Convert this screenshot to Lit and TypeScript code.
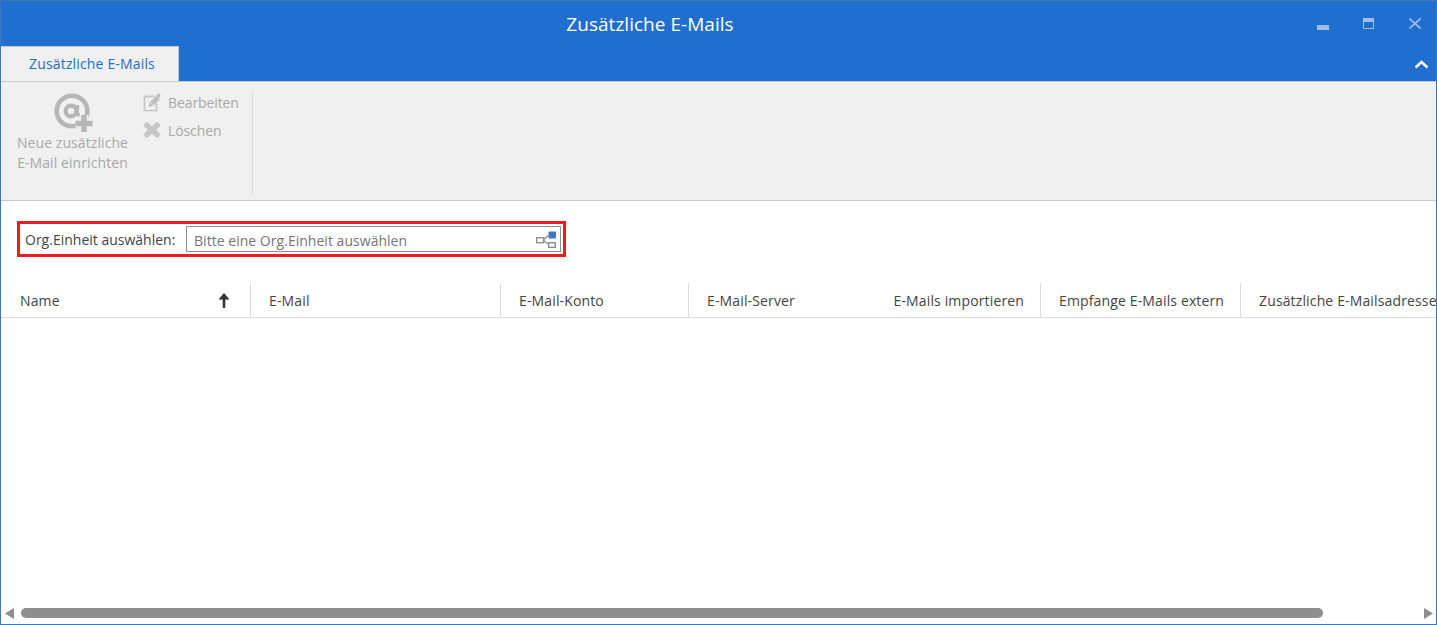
import { LitElement, html, css } from "lit";
import { customElement } from "lit/decorators.js";

@customElement("app-root")
export class AppRoot extends LitElement {
  static styles = css`
    :host {
      display: block;
      width: 1437px;
      height: 625px;
      font-family: "Open Sans", "Noto Sans", "Liberation Sans", sans-serif;
      font-size: 14px;
      color: #444;
    }
    * { box-sizing: border-box; }
    .window {
      width: 100%;
      height: 100%;
      display: flex;
      flex-direction: column;
      border: 1px solid #3a78bd;
      border-top-color: #3b76b5;
      background: #fff;
      overflow: hidden;
    }
    .titlebar {
      height: 80px;
      flex: none;
      background: #206ecd;
      display: flex;
      flex-direction: column;
      position: relative;
    }
    .title-row {
      height: 45px;
      flex: none;
      display: flex;
      align-items: center;
      justify-content: center;
      color: #fff;
      font-size: 19px;
      letter-spacing: 0.03px;
      padding: 0 137px 0 0;
    }
    .winbtns {
      position: absolute;
      top: 0;
      right: 0;
      width: 130px;
      height: 40px;
    }
    .winbtns svg { position: absolute; }
    .tab-row {
      height: 35px;
      flex: none;
      display: flex;
      align-items: flex-end;
      justify-content: space-between;
    }
    .tab {
      width: 178px;
      height: 35px;
      background: #f0f0f0;
      border: 1px solid #c8c8c8;
      border-bottom: none;
      border-left-color: #f0f0f0;
      color: #206ecd;
      display: flex;
      align-items: center;
      justify-content: center;
      letter-spacing: 0.16px;
      padding: 0 0 1px 4px;
    }
    .collapse { margin: 0 7px 12px 0; display: block; }
    .ribbon {
      height: 120px;
      flex: none;
      background: #f0f0f0;
      border-top: 1px solid #c8c8c8;
      border-bottom: 1px solid #c8c8c8;
      display: flex;
      padding: 9px 0 5px 0;
      color: #a9a9a9;
      letter-spacing: 0.08px;
    }
    .big {
      width: 142px;
      display: flex;
      flex-direction: column;
      align-items: center;
      padding: 1px 0 0 1px;
      line-height: 20px;
      text-align: center;
    }
    .big svg { margin-bottom: 1px; display: block; }
    .small-col {
      width: 110px;
      display: flex;
      flex-direction: column;
      gap: 8px;
      border-right: 1px solid #dcdcdc;
      padding-top: 1px;
      letter-spacing: -0.1px;
    }
    .small {
      height: 20px;
      display: flex;
      align-items: center;
      gap: 7px;
    }
    .body { flex: 1; display: flex; flex-direction: column; min-height: 0; }
    .filter-row { padding: 20px 0 0 16px; height: 82px; flex: none; }
    .filter {
      width: 549px;
      height: 36px;
      border: 3px solid #ed1c24;
      display: flex;
      align-items: center;
      padding: 0 2px 0 5px;
      color: #444;
    }
    .filter label { width: 161px; flex: none; }
    .input {
      flex: 1;
      height: 26px;
      border: 1px solid #8f8f8f;
      display: flex;
      align-items: center;
      justify-content: space-between;
      padding: 0 4px 0 7px;
      color: #757575;
      letter-spacing: 0.03px;
    }
    .input span { padding-top: 3px; }
    .grid-head {
      height: 35px;
      flex: none;
      display: flex;
      border-bottom: 1px solid #dcdcdc;
      letter-spacing: 0.14px;
      white-space: nowrap;
      overflow: hidden;
    }
    .col {
      flex: none;
      display: flex;
      align-items: center;
      justify-content: space-between;
      border-right: 1px solid #dcdcdc;
      padding: 0 18px 0 18px;
    }
    .col.name { padding: 0 20px 0 19px; }
    .col.none { border-right: none; }
    .col.right { justify-content: flex-end; padding: 0 16px 0 0; }
    .rows { flex: 1; }
    .scroll {
      height: 18px;
      flex: none;
      display: flex;
      align-items: center;
      padding: 0 3px 0 4px;
      gap: 6px;
      margin-bottom: 2px;
    }
    .thumb {
      width: 1302px;
      height: 10px;
      border-radius: 5px;
      background: #8e8e8e;
      margin-left: 1px;
    }
    .spacer { flex: 1; }
  `;

  render() {
    return html`
      <div class="window">
        <div class="titlebar">
          <div class="title-row">Zusätzliche E-Mails</div>
          <div class="winbtns">
            <svg style="left:11px;top:24px" width="12" height="5" viewBox="0 0 12 5"><rect width="12" height="5" fill="#9dc0ea"/></svg>
            <svg style="left:57px;top:17px" width="11" height="11" viewBox="0 0 11 11"><rect x=".5" y=".5" width="10" height="10" fill="none" stroke="#9dc0ea"/><rect width="11" height="4" fill="#9dc0ea"/></svg>
            <svg style="left:103px;top:17px" width="12" height="11" viewBox="0 0 12 11"><path d="M.5.5l11 10M11.500.5l-11 10" stroke="#9dc0ea" stroke-width="1.6" fill="none"/></svg>
          </div>
          <div class="tab-row">
            <div class="tab">Zusätzliche E-Mails</div>
            <svg class="collapse" width="15" height="9" viewBox="0 0 15 9"><path d="M1.500 7.500l6-5.500 6 5.500" fill="none" stroke="#fff" stroke-width="2.400"/></svg>
          </div>
        </div>
        <div class="ribbon">
          <div class="big">
            <svg width="40" height="40" viewBox="0 0 40 40">
              <circle cx="19" cy="19" r="15.300" fill="none" stroke="#b6b6b6" stroke-width="4.600"/>
              <ellipse cx="18" cy="19" rx="5.400" ry="5.400" fill="none" stroke="#b6b6b6" stroke-width="4.200"/>
              <path d="M24.500 13l-.5 7q0 3 3 3" fill="none" stroke="#b6b6b6" stroke-width="3.600"/>
              <path d="M31 23v17M22.500 31.500h17" stroke="#f0f0f0" stroke-width="8.500"/>
              <path d="M31 23v17M22.500 31.500h17" stroke="#b6b6b6" stroke-width="5.500"/>
            </svg>
            <span>Neue zusätzliche<br />E-Mail einrichten</span>
          </div>
          <div class="small-col">
            <div class="small">
              <svg width="18" height="19" viewBox="0 0 18 19">
                <path d="M12 3.500H1.500v14h12V10" fill="none" stroke="#c6c6c6" stroke-width="1.700"/>
                <path d="M3 1.500v3M6 1.500v3M9 1.500v3" stroke="#c6c6c6"/>
                <path d="M5.500 14l1-4.500 7-7 3.500 3.500-7 7z" fill="#c0c0c0"/>
                <path d="M7.500 9.500l3 3" stroke="#f0f0f0"/>
                <circle cx="15.500" cy="2.500" r="2" fill="#c0c0c0"/>
              </svg>
              <span>Bearbeiten</span>
            </div>
            <div class="small">
              <svg width="18" height="16" viewBox="0 0 18 16"><path d="M4 3.500l10 9M14 3.500l-10 9" stroke="#c6c6c6" stroke-width="5.500" stroke-linecap="square"/></svg>
              <span>Löschen</span>
            </div>
          </div>
        </div>
        <div class="body">
          <div class="filter-row">
            <div class="filter">
              <label>Org.Einheit auswählen:</label>
              <div class="input">
                <span>Bitte eine Org.Einheit auswählen</span>
                <svg width="21" height="17" viewBox="0 0 21 17">
                  <rect x="1.700" y="6.700" width="7" height="5" fill="none" stroke="#8f8f8f" stroke-width="1.400"/>
                  <rect x="13.700" y="11.700" width="6.600" height="4.600" fill="none" stroke="#8f8f8f" stroke-width="1.400"/>
                  <rect x="13.500" y="0.500" width="7.500" height="7" rx="1" fill="#3d7cc4"/>
                  <path d="M8.500 8.500L13.500 4.500M8.500 9.500l5.500 4" stroke="#8f8f8f" stroke-width="1.300" fill="none"/>
                </svg>
              </div>
            </div>
          </div>
          <div class="grid-head">
            <div class="col name" style="width:250px">
              <span>Name</span>
              <svg width="12" height="15" viewBox="0 0 12 15"><path d="M6 15V5" stroke="#333" stroke-width="2.600"/><path d="M6 0l5.500 6.500h-11z" fill="#333"/></svg>
            </div>
            <div class="col" style="width:250px"><span>E-Mail</span></div>
            <div class="col" style="width:188px"><span>E-Mail-Konto</span></div>
            <div class="col none" style="width:186px"><span>E-Mail-Server</span></div>
            <div class="col right" style="width:166px"><span>E-Mails importieren</span></div>
            <div class="col" style="width:200px"><span>Empfange E-Mails extern</span></div>
            <div class="col none" style="width:197px;overflow:hidden"><span>Zusätzliche E-Mailsadressen</span></div>
          </div>
          <div class="rows"></div>
          <div class="scroll">
            <svg width="9" height="11" viewBox="0 0 9 11"><path d="M9 0v11L0 5.500z" fill="#8e8e8e"/></svg>
            <div class="thumb"></div>
            <div class="spacer"></div>
            <svg width="9" height="11" viewBox="0 0 9 11"><path d="M0 0v11l9-5.500z" fill="#8e8e8e"/></svg>
          </div>
        </div>
      </div>
    `;
  }
}
